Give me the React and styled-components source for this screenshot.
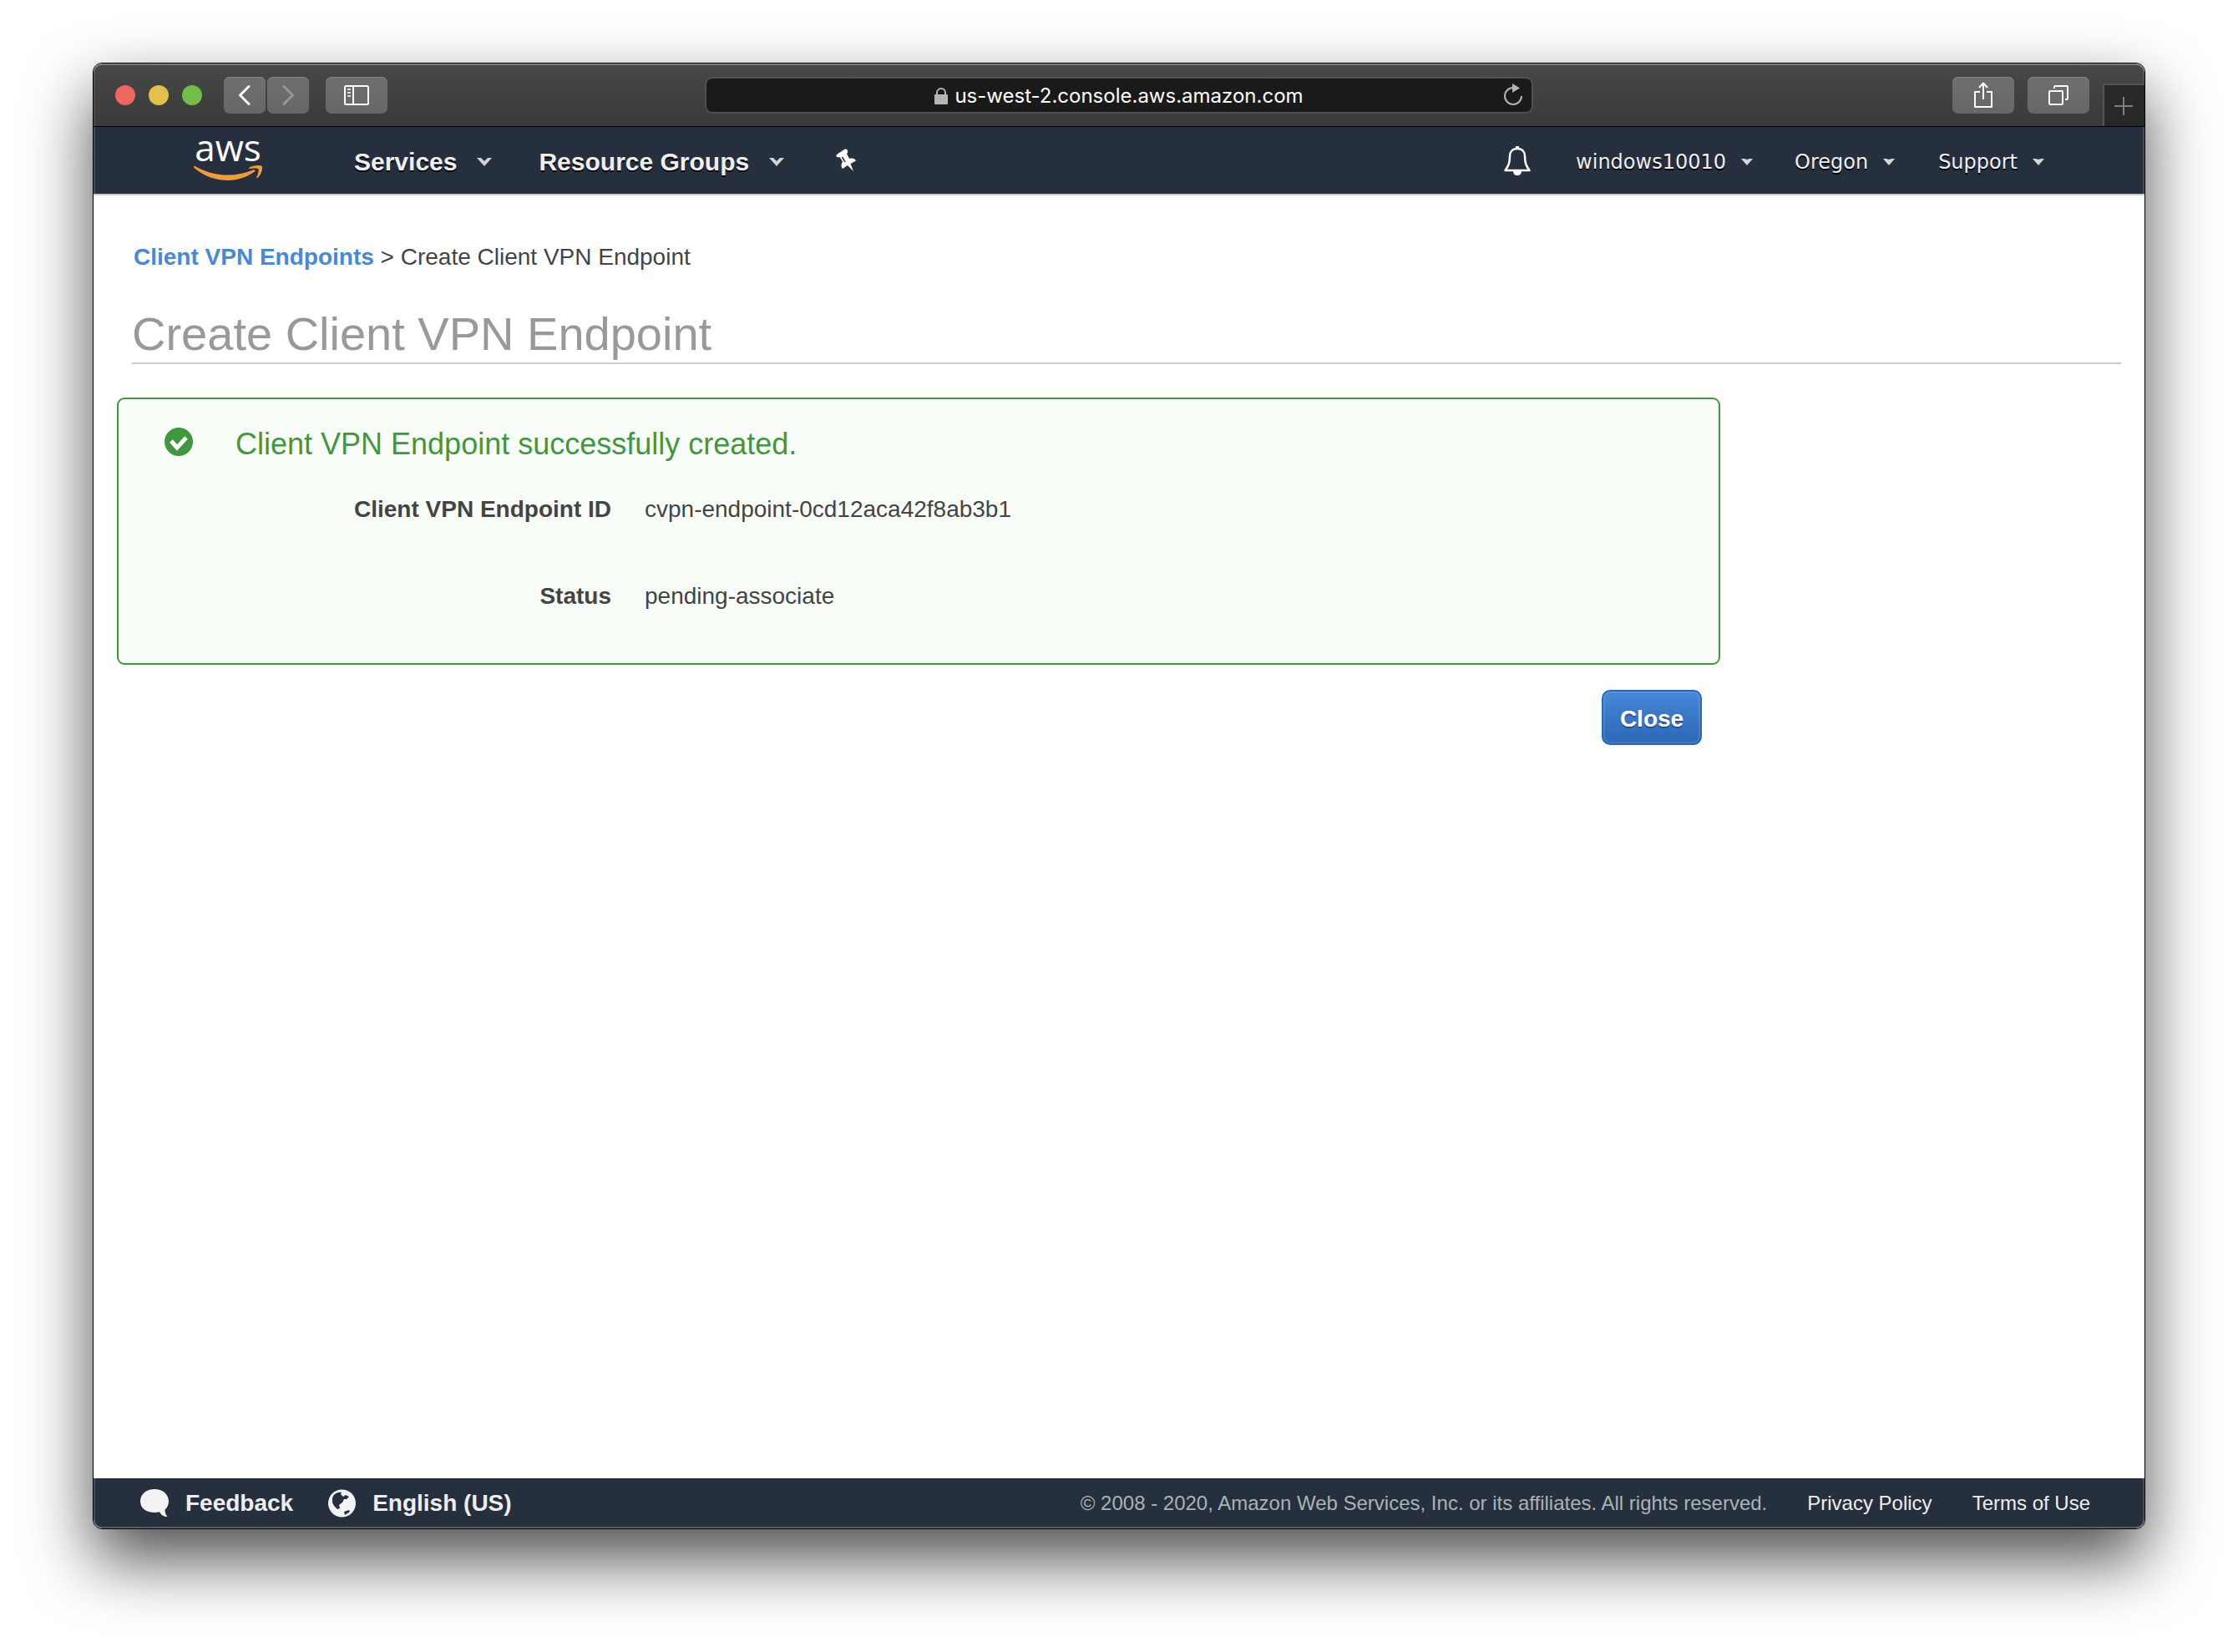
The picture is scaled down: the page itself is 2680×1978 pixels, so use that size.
import React from "react";
import styled, { createGlobalStyle, css } from "styled-components";

const SANS = '"Liberation Sans", Arial, Helvetica, sans-serif';
const WIDE = '"DejaVu Sans", Verdana, sans-serif';
const SYSTEM = 'Inter, "Liberation Sans", sans-serif';

const GlobalStyle = createGlobalStyle`
  *, *::before, *::after { box-sizing: border-box; }
  body {
    margin: 0;
    background: #fff;
    color: #444;
    font: 28px/40px ${SANS};
  }
  button, input { font: inherit; }
  svg { display: block; flex: none; overflow: visible; }
`;

const Desktop = styled.div`
  display: flex;
  min-height: 100vh;
  padding: 75px 111px 147px;
  overflow: hidden;
`;

const BrowserWindow = styled.div`
  flex: 1;
  min-width: 0;
  display: flex;
  flex-direction: column;
  border: 1px solid #000;
  border-radius: 11px;
  background: #fff;
  box-shadow: 0 36px 80px rgba(0, 0, 0, 0.7);
`;

const edge = css`
  box-shadow: inset 2px 0 rgba(255, 255, 255, 0.16), inset -2px 0 rgba(255, 255, 255, 0.16);
`;

const TitleBar = styled.div`
  display: grid;
  grid-template-columns: 1fr minmax(0, 992px) 1fr;
  align-items: center;
  height: 76px;
  border-bottom: 1px solid #000;
  border-radius: 10px 10px 0 0;
  background: linear-gradient(#474849, #393a39);
  box-shadow: inset 0 2px rgba(255, 255, 255, 0.28), inset 2px 0 rgba(255, 255, 255, 0.08),
    inset -2px 0 rgba(255, 255, 255, 0.08);
`;

const ToolGroup = styled.div`
  display: flex;
  align-items: center;
  height: 100%;
  gap: ${(p) => p.$gap}px;
  justify-content: ${(p) => (p.$end ? "flex-end" : "flex-start")};
  padding-left: ${(p) => p.$start || 0}px;
`;

const Light = styled.button`
  width: 24px;
  height: 24px;
  padding: 0;
  border: 0;
  border-radius: 50%;
  background: ${(p) => p.$color};
`;

const ToolButton = styled.button`
  display: flex;
  align-items: center;
  justify-content: center;
  width: ${(p) => (p.$narrow ? 50 : 74)}px;
  height: 44px;
  padding: 0;
  border: 0;
  border-radius: 7px;
  color: ${(p) => (p.$dim ? "#979899" : "#fff")};
  background: linear-gradient(#6e6f70, #666767);
  box-shadow: inset 0 1px #838485;
`;

const NewTab = styled.button`
  align-self: flex-end;
  display: flex;
  align-items: center;
  justify-content: center;
  width: 50px;
  height: 51px;
  padding: 0 2px 0 0;
  border: solid #545555;
  border-width: 2px 0 0 2px;
  color: #7e7f7f;
  background: #282828;
`;

const AddressBar = styled.div`
  display: flex;
  align-items: center;
  justify-content: center;
  gap: 9px;
  height: 44px;
  padding: 2px 10px 0 43px;
  border: 2px solid #505151;
  border-radius: 9px;
  background: #1a1a1a;
  color: #fff;
  font: 24px/36px ${SYSTEM};
`;

const Address = styled.div`
  flex: 1;
  display: flex;
  align-items: center;
  justify-content: center;
  gap: 8px;
`;

const PlainButton = styled.button`
  display: flex;
  padding: 0;
  border: 0;
  background: none;
  color: inherit;
`;

const NavBar = styled.header`
  ${edge}
  display: flex;
  align-items: center;
  height: 82px;
  padding: 4px 120px 0;
  border-bottom: 2px solid #ccc;
  background: #262f3e;
  color: #eee;
`;

const LogoLink = styled.a`
  margin-right: 110px;
`;

const MenuButton = styled(PlainButton)`
  align-items: center;
  gap: ${(p) => (p.$small ? 18 : 24)}px;
  margin-right: ${(p) => p.$after || 0}px;
  font: ${(p) => (p.$small ? `24px/40px ${WIDE}` : `bold 30px/40px ${SANS}`)};
  text-shadow: 0 2px #000;
  white-space: nowrap;
`;

const IconButton = styled(PlainButton)`
  color: #fff;
  margin-right: ${(p) => p.$after || 0}px;
`;

const Spacer = styled.div`
  flex: 1;
`;

const Main = styled.main`
  flex: 1;
  padding: 54px 28px 40px;
`;

const PageHead = styled.div`
  margin-left: 18px;
`;

const Crumbs = styled.nav`
  padding-left: 2px;
`;

const CrumbLink = styled.a`
  color: #4688d9;
  font-weight: bold;
  text-decoration: none;
`;

const Title = styled.h1`
  margin: 40px 0;
  padding-bottom: 2px;
  border-bottom: 2px solid #ccc;
  color: #999;
  font: 56px/64px ${SANS};
`;

const Column = styled.div`
  width: 80%;
`;

const Notice = styled.section`
  display: flex;
  align-items: flex-start;
  gap: 51px;
  padding: 34px 55px 60px;
  border: 2px solid #3f983f;
  border-radius: 9px;
  background: #f8fdf7;
`;

const NoticeTitle = styled.h2`
  margin: 0 0 38px;
  color: #3f983f;
  font: 36px/40px ${SANS};
`;

const Details = styled.dl`
  display: grid;
  grid-template-columns: 450px auto;
  gap: 64px 40px;
  margin: 0;
`;

const Term = styled.dt`
  font-weight: bold;
  text-align: right;
`;

const Value = styled.dd`
  margin: 0;
`;

const Actions = styled.div`
  display: flex;
  justify-content: flex-end;
  padding: 30px 22px 0;
`;

const PrimaryButton = styled.button`
  width: 120px;
  height: 66px;
  padding: 3px 0 0;
  border: 2px solid #2a67b7;
  border-radius: 10px;
  color: #fff;
  background: linear-gradient(#4688d8, #2c67b6);
  box-shadow: inset 0 0 3px 1px rgba(255, 255, 255, 0.2);
  font-weight: bold;
  text-shadow: 0 2px 1px rgba(0, 0, 0, 0.3);
`;

const Footer = styled.footer`
  display: flex;
  align-items: center;
  height: 60px;
  padding: 0 65px 0 56px;
  border-radius: 0 0 10px 10px;
  background: #262f3e;
  box-shadow: inset 0 -2px rgba(255, 255, 255, 0.22), inset 2px 0 rgba(255, 255, 255, 0.16),
    inset -2px 0 rgba(255, 255, 255, 0.16);
  color: #eee;
`;

const FooterButton = styled(PlainButton)`
  align-items: center;
  gap: 20px;
  margin-right: 42px;
  font-weight: bold;
`;

const Legal = styled.div`
  flex: 1;
  display: flex;
  justify-content: flex-end;
  gap: 48px;
  font-size: 24px;
  color: #a9b4b4;
`;

const LegalLink = styled.a`
  color: #eee;
  text-decoration: none;
`;

const Caret = ({ small }) =>
  small ? (
    <svg width="14" height="8" viewBox="0 0 14 8" aria-hidden="true">
      <path d="M0 0h4l3 1 3-1h4L7 8z" fill="#d6d6d6" />
    </svg>
  ) : (
    <svg width="18" height="10" viewBox="0 0 18 10" aria-hidden="true">
      <path d="M0 0h5l4 4 4-4h5L9 10z" fill="#d2d2d2" />
    </svg>
  );

const Chevron = ({ flip }) => (
  <svg width="16" height="26" viewBox="0 0 16 26" fill="none" stroke="currentColor" strokeWidth="3" strokeLinecap="round" strokeLinejoin="round" aria-hidden="true">
    <path d={flip ? "M3 2.5 13.5 13 3 23.5" : "M13 2.5 2.500 13 13 23.5"} />
  </svg>
);

const SidebarIcon = () => (
  <svg width="30" height="24" viewBox="0 0 30 24" fill="none" stroke="currentColor" strokeWidth="2" aria-hidden="true">
    <rect x="1" y="1" width="28" height="22" rx="1.5" />
    <path d="M11 1v22" />
    <path d="M4 5h4M4 9h4M4 13h4" opacity=".75" />
  </svg>
);

const LockIcon = () => (
  <svg width="16" height="20" viewBox="0 0 16 20" aria-hidden="true">
    <path d="M3 9V6a5 5 0 0 1 10 0v3" fill="none" stroke="#b5b5b5" strokeWidth="2" />
    <rect y="8" width="16" height="12" rx="1" fill="#b5b5b5" />
  </svg>
);

const ReloadIcon = () => (
  <svg width="24" height="28" viewBox="0 0 24 28" aria-hidden="true">
    <path d="M22 14a10 10 0 1 1-10-10" fill="none" stroke="#b5b5b5" strokeWidth="2" />
    <path d="M11-1v11l9-5.500z" fill="#b5b5b5" />
  </svg>
);

const ShareIcon = () => (
  <svg width="24" height="34" viewBox="0 0 24 34" fill="none" stroke="currentColor" strokeWidth="2" strokeLinejoin="round" aria-hidden="true">
    <path d="M8 13H2v18h20V13h-6M12 22V3M7 8l5-5.500L17 8" />
  </svg>
);

const TabsIcon = () => (
  <svg width="24" height="24" viewBox="0 0 24 24" fill="none" stroke="currentColor" strokeWidth="2" strokeLinejoin="round" aria-hidden="true">
    <rect x="1" y="7" width="16" height="16" rx="1" />
    <path d="M7 4V2q0-1 1-1h14q1 0 1 1v14q0 1-1 1h-2" />
  </svg>
);

const PlusIcon = () => (
  <svg width="22" height="22" viewBox="0 0 22 22" stroke="currentColor" strokeWidth="2" aria-hidden="true">
    <path d="M11 0v22M0 11h22" />
  </svg>
);

const AwsLogo = () => (
  <svg width="82" height="56" viewBox="0 0 82 56" role="img" aria-label="aws">
    <text x="41" y="27" textAnchor="middle" fill="#fff" fontFamily="Open Sans, Noto Sans, sans-serif" fontSize="44" fontWeight="500">
      aws
    </text>
    <path d="M0 34c0-1 1-1.500 2-.8C14 40 27 43.500 41 43.500c10 0 20-2 30-6 2-.8 3.500 1 1.500 2.300C63 46.500 52 50 41 50 25 50 11 44 .5 35z" fill="#f19c38" />
    <path d="M66 35c5-3.500 14-3.500 15.500-2s0 10-5 14c-.8.700-1.500.3-1.200-.5 1-3 3.200-8.500 2.200-10s-7-.8-10.500-.5c-1 .1-1.500-.5-1-1z" fill="#f19c38" />
  </svg>
);

const PinIcon = () => (
  <svg width="26" height="32" viewBox="0 0 26 32" aria-hidden="true">
    <path d="M1 7 10 1c2-1 4-.5 4 2v2l-1 1 3 6c4-1 7 0 8 2.500L17.500 18 21 27l-7-7-6 4c-2-2-2-5 0-8.500L4.500 10l-1.500.5C1 10.500-.5 9 1 7z" fill="currentColor" />
    <path d="m7.500 10 3.500 6" stroke="#262f3e" strokeWidth="1.500" />
  </svg>
);

const BellIcon = () => (
  <svg width="32" height="38" viewBox="0 0 32 38" fill="none" stroke="currentColor" strokeWidth="2.500" strokeLinejoin="round" aria-hidden="true">
    <path d="M16 3c-6 0-9 4-9 9 0 9-2 12-5.500 17h29C27 24 25 21 25 12c0-5-3-9-9-9z" />
    <path d="M11 30h10c0 3-2 5-5 5s-5-2-5-5z" fill="currentColor" stroke="none" />
    <path d="M16 0v3" strokeWidth="4" />
  </svg>
);

const CheckIcon = () => (
  <svg width="34" height="34" viewBox="0 0 34 34" aria-hidden="true">
    <circle cx="17" cy="17" r="17" fill="#3f983f" />
    <path d="m8 16 7 8L26 12" fill="none" stroke="#fff" strokeWidth="5" />
  </svg>
);

const SpeechIcon = () => (
  <svg width="34" height="34" viewBox="0 0 34 34" aria-hidden="true">
    <path d="M17 0C7.500 0 0 6 0 14.500S7.500 28 17 28c2 0 4-.2 6-.8 2 3.600 5 5.800 9.500 5.800-2-2-3-5-3-8.500 3-2.500 4.500-6 4.500-10C34 6 26.500 0 17 0z" fill="#f3f3f3" />
  </svg>
);

const GlobeIcon = () => (
  <svg width="33" height="34" viewBox="0 0 33 34" aria-hidden="true">
    <circle cx="16.500" cy="17" r="16.500" fill="#f3f3f3" />
    <path d="M5 11c1-5 6-8 11-7l-1 2 3 3 3-2 4 2-3 3-3 0-2 4-4 3 1 4-3 1-4-4-2-4z" fill="#262f3e" />
    <path d="m19 27 6-2 1 2-6 4z" fill="#262f3e" />
  </svg>
);

export default function App() {
  return (
    <>
      <GlobalStyle />
      <Desktop>
        <BrowserWindow>
          <TitleBar>
            <ToolGroup $gap={20} $start={26}>
              <ToolGroup $gap={16}>
                <Light $color="#ee675c" aria-label="Close window" />
                <Light $color="#e1c04c" aria-label="Minimize window" />
                <Light $color="#72be47" aria-label="Zoom window" />
              </ToolGroup>
              <ToolGroup $gap={2} $start={6}>
                <ToolButton $narrow aria-label="Back"><Chevron /></ToolButton>
                <ToolButton $narrow $dim aria-label="Forward"><Chevron flip /></ToolButton>
              </ToolGroup>
              <ToolButton aria-label="Show sidebar"><SidebarIcon /></ToolButton>
            </ToolGroup>
            <AddressBar>
              <Address>
                <LockIcon />
                us-west-2.console.aws.amazon.com
              </Address>
              <PlainButton aria-label="Reload"><ReloadIcon /></PlainButton>
            </AddressBar>
            <ToolGroup $gap={16} $end>
              <ToolButton aria-label="Share"><ShareIcon /></ToolButton>
              <ToolButton aria-label="Show all tabs"><TabsIcon /></ToolButton>
              <NewTab aria-label="New tab"><PlusIcon /></NewTab>
            </ToolGroup>
          </TitleBar>

          <NavBar>
            <LogoLink href="#home"><AwsLogo /></LogoLink>
            <MenuButton $after={56}>Services <Caret /></MenuButton>
            <MenuButton $after={62}>Resource Groups <Caret /></MenuButton>
            <IconButton aria-label="Pin shortcuts"><PinIcon /></IconButton>
            <Spacer />
            <IconButton $after={54} aria-label="Notifications"><BellIcon /></IconButton>
            <MenuButton $small $after={50}>windows10010 <Caret small /></MenuButton>
            <MenuButton $small $after={52}>Oregon <Caret small /></MenuButton>
            <MenuButton $small>Support <Caret small /></MenuButton>
          </NavBar>

          <Main>
            <PageHead>
              <Crumbs>
                <CrumbLink href="#endpoints">Client VPN Endpoints</CrumbLink> &gt; Create Client VPN Endpoint
              </Crumbs>
              <Title>Create Client VPN Endpoint</Title>
            </PageHead>
            <Column>
              <Notice>
                <CheckIcon />
                <div>
                  <NoticeTitle>Client VPN Endpoint successfully created.</NoticeTitle>
                  <Details>
                    <Term>Client VPN Endpoint ID</Term>
                    <Value>cvpn-endpoint-0cd12aca42f8ab3b1</Value>
                    <Term>Status</Term>
                    <Value>pending-associate</Value>
                  </Details>
                </div>
              </Notice>
              <Actions>
                <PrimaryButton>Close</PrimaryButton>
              </Actions>
            </Column>
          </Main>

          <Footer>
            <FooterButton><SpeechIcon /> Feedback</FooterButton>
            <FooterButton><GlobeIcon /> English (US)</FooterButton>
            <Legal>
              <span>© 2008 - 2020, Amazon Web Services, Inc. or its affiliates. All rights reserved.</span>
              <LegalLink href="#privacy">Privacy Policy</LegalLink>
              <LegalLink href="#terms">Terms of Use</LegalLink>
            </Legal>
          </Footer>
        </BrowserWindow>
      </Desktop>
    </>
  );
}
